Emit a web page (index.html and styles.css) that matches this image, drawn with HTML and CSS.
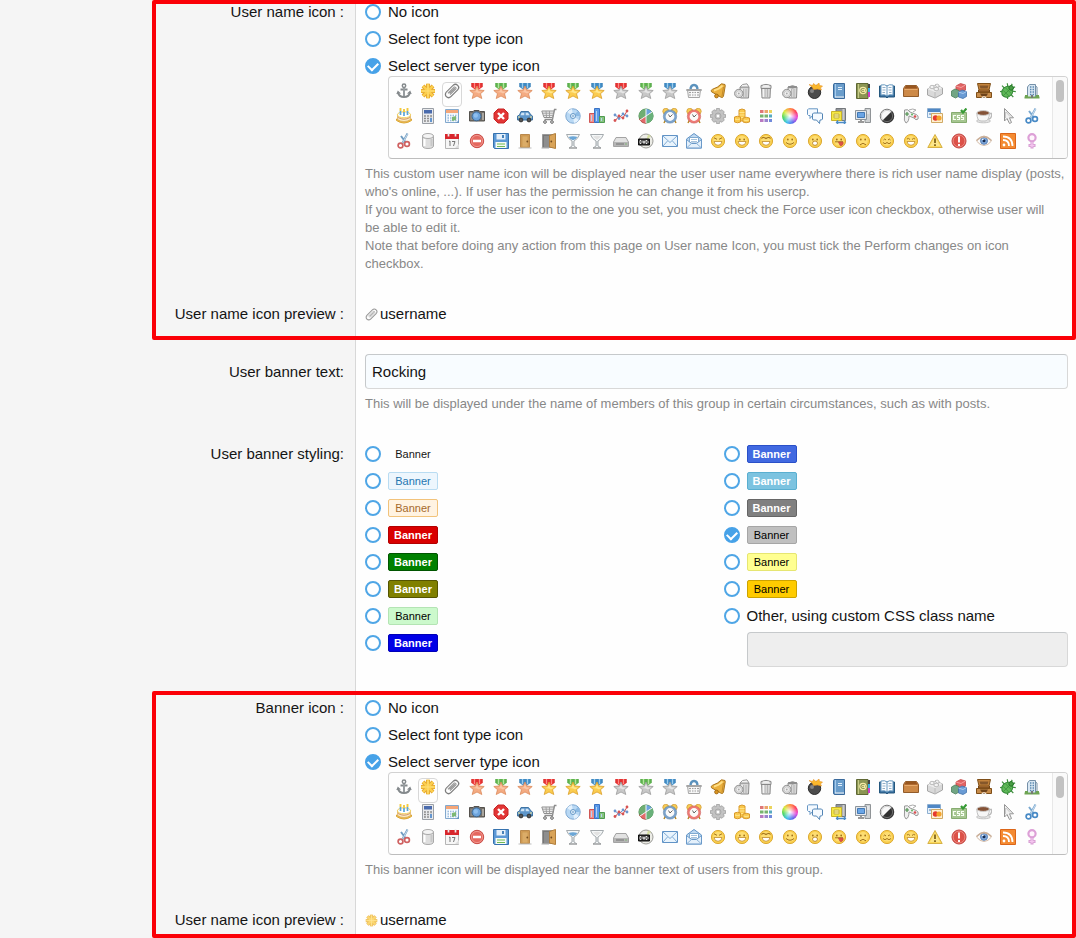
FILE: index.html
```
<!DOCTYPE html>
<html lang="en">
<head>
<meta charset="utf-8">
<meta name="viewport" content="width=device-width, initial-scale=1">
<title>User group options</title>
<link rel="stylesheet" href="styles.css">
</head>
<body>
<form class="form">
  <section class="section section--top marked">
    <div class="row">
      <div class="row-label" id="name-icon-label">User name icon :</div>
      <div class="row-body" role="radiogroup" aria-labelledby="name-icon-label">
        <div class="options">
          <label class="option"><input class="radio" type="radio" name="nameicon"><span>No icon</span></label>
          <label class="option"><input class="radio" type="radio" name="nameicon"><span>Select font type icon</span></label>
          <label class="option"><input class="radio" type="radio" name="nameicon" checked><span>Select server type icon</span></label>
        </div>
        <div class="picker">
          <div class="picker-list" data-selected="attach" data-preview="name-preview"></div>
          <div class="picker-track"><div class="picker-thumb"></div></div>
        </div>
        <p class="hint">This custom user name icon will be displayed near the user user name everywhere there is rich user name display (posts, who's online, ...). If user has the permission he can change it from his usercp.<br>If you want to force the user icon to the one you set, you must check the Force user icon checkbox, otherwise user will be&nbsp;able to edit it.<br>Note that before doing any action from this page on User name Icon, you must tick the Perform changes on icon checkbox.</p>
      </div>
    </div>
    <div class="row row--preview">
      <div class="row-label">User name icon preview :</div>
      <div class="row-body preview"><span class="preview-icon" id="name-preview"></span><span>username</span></div>
    </div>
  </section>

  <section class="section section--middle">
    <div class="row">
      <label class="row-label row-label--input" for="banner-text">User banner text:</label>
      <div class="row-body">
        <input class="text-input" id="banner-text" type="text" value="Rocking">
        <p class="hint">This will be displayed under the name of members of this group in certain circumstances, such as with posts.</p>
      </div>
    </div>
    <div class="row row--preview">
      <div class="row-label" id="styling-label">User banner styling:</div>
      <div class="row-body columns" role="radiogroup" aria-labelledby="styling-label">
        <div class="options">
          <label class="option"><input class="radio" type="radio" name="style"><span class="banner">Banner</span></label>
          <label class="option"><input class="radio" type="radio" name="style"><span class="banner banner--primary">Banner</span></label>
          <label class="option"><input class="radio" type="radio" name="style"><span class="banner banner--accent">Banner</span></label>
          <label class="option"><input class="radio" type="radio" name="style"><span class="banner banner--red">Banner</span></label>
          <label class="option"><input class="radio" type="radio" name="style"><span class="banner banner--green">Banner</span></label>
          <label class="option"><input class="radio" type="radio" name="style"><span class="banner banner--olive">Banner</span></label>
          <label class="option"><input class="radio" type="radio" name="style"><span class="banner banner--light-green">Banner</span></label>
          <label class="option"><input class="radio" type="radio" name="style"><span class="banner banner--blue">Banner</span></label>
        </div>
        <div class="options">
          <label class="option"><input class="radio" type="radio" name="style"><span class="banner banner--royal">Banner</span></label>
          <label class="option"><input class="radio" type="radio" name="style"><span class="banner banner--sky">Banner</span></label>
          <label class="option"><input class="radio" type="radio" name="style"><span class="banner banner--gray">Banner</span></label>
          <label class="option"><input class="radio" type="radio" name="style" checked><span class="banner banner--silver">Banner</span></label>
          <label class="option"><input class="radio" type="radio" name="style"><span class="banner banner--yellow">Banner</span></label>
          <label class="option"><input class="radio" type="radio" name="style"><span class="banner banner--orange">Banner</span></label>
          <div class="custom">
            <label class="option"><input class="radio" type="radio" name="style"><span>Other, using custom CSS class name</span></label>
            <input class="text-input text-input--custom" type="text" aria-label="Custom CSS class name" disabled>
          </div>
        </div>
      </div>
    </div>
  </section>

  <section class="section section--bottom marked">
    <div class="row">
      <div class="row-label" id="banner-icon-label">Banner icon :</div>
      <div class="row-body" role="radiogroup" aria-labelledby="banner-icon-label">
        <div class="options">
          <label class="option"><input class="radio" type="radio" name="bannericon"><span>No icon</span></label>
          <label class="option"><input class="radio" type="radio" name="bannericon"><span>Select font type icon</span></label>
          <label class="option"><input class="radio" type="radio" name="bannericon" checked><span>Select server type icon</span></label>
        </div>
        <div class="picker">
          <div class="picker-list" data-selected="asterisk" data-preview="banner-preview"></div>
          <div class="picker-track"><div class="picker-thumb"></div></div>
        </div>
        <p class="hint">This banner icon will be displayed near the banner text of users from this group.</p>
      </div>
    </div>
    <div class="row row--preview">
      <div class="row-label">User name icon preview :</div>
      <div class="row-body preview"><span class="preview-icon" id="banner-preview"></span><span>username</span></div>
    </div>
  </section>
</form>
<script src="icons.js"></script>
</body>
</html>
```
FILE: styles.css
```
* {
  box-sizing: border-box;
}

body {
  margin: 0;
  background: #fefefe;
  color: #141414;
  font-family: "Liberation Sans", Arial, sans-serif;
  font-size: 15px;
  line-height: 18px;
}

.form {
  min-height: 100vh;
  background: linear-gradient(to right, #f5f5f5 355px, #d8d8d8 355px, #d8d8d8 356px, #fefefe 356px);
}

.section--top {
  padding: 3px 0 17px;
}

.section--middle {
  padding: 14px 0 24px;
}

.section--bottom {
  padding: 8px 0 9px;
}

/* Red frame drawn over the highlighted settings */
.marked {
  position: relative;
}

.marked::after {
  content: "";
  position: absolute;
  inset: 0 0 0 152px;
  border: 4px solid #fb0007;
  border-radius: 2px;
  pointer-events: none;
}

.row {
  display: grid;
  grid-template-columns: 355px minmax(0, 1fr);
}

.row--preview {
  margin-top: 32px;
}

.row-label {
  padding-right: 11px;
  text-align: right;
}

.row-label--input {
  padding-top: 9px;
}

.row-body {
  padding: 0 8px 0 10px;
}

.options {
  display: flex;
  flex-direction: column;
  gap: 9px;
}

.option {
  display: flex;
  align-items: center;
  gap: 7px;
  height: 18px;
}

.radio {
  appearance: none;
  flex: none;
  display: grid;
  place-content: center;
  width: 16px;
  height: 16px;
  margin: 0;
  border: 2px solid #4fa6e6;
  border-radius: 50%;
  background: #fff;
}

.radio:checked {
  background: #47a2e8;
  border-color: #47a2e8;
}

.radio:checked::before {
  content: "";
  width: 8px;
  height: 5px;
  margin-bottom: 2px;
  border: solid #fff;
  border-width: 0 0 2px 2px;
  transform: rotate(-45deg);
}

.hint {
  margin: 6px 0 0;
  color: #888;
  font-size: 13px;
  line-height: 18px;
}

.picker {
  display: flex;
  margin: 1px 0 0 23px;
  border: 1px solid #d2d2d2;
  border-bottom-color: #bdbdbd;
  border-radius: 4px;
  background: #fefefe;
  overflow: hidden;
}

.picker-list {
  flex: 1;
  display: grid;
  grid-template-columns: repeat(auto-fill, minmax(24px, 1fr));
  grid-auto-rows: 25px;
  justify-items: center;
  padding: 5px 8px 1px 3px;
}

.picker-track {
  width: 15px;
  padding: 3px;
  border-left: 1px solid #e8e8e8;
  background: #fafafa;
}

.picker-thumb {
  height: 22px;
  border-radius: 4px;
  background: #c2c2c2;
}

.icon-button {
  display: block;
  width: 20px;
  height: 25px;
  padding: 0 1px 7px;
  border: 1px solid transparent;
  border-radius: 4px;
  background: none;
  cursor: pointer;
}

.icon-button[aria-pressed="true"] {
  border-color: #d8d8d8;
}

.icon {
  display: block;
  width: 16px;
  height: 16px;
}

.preview {
  display: flex;
  align-items: center;
  gap: 2px;
}

.preview-icon {
  opacity: 0.8;
}

.preview-icon .icon {
  width: 13px;
  height: 13px;
}

.text-input {
  display: block;
  width: 100%;
  height: 35px;
  padding: 0 6px;
  border: 1px solid #d8d8d8;
  border-color: #c6c9cb #d8d8d8 #d8d8d8 #c6c9cb;
  border-radius: 4px;
  background: #f8fcff;
  color: #141414;
  font: inherit;
}

.columns {
  display: grid;
  grid-template-columns: 1fr 1fr;
  gap: 14px;
}

.custom {
  display: grid;
  gap: 7px;
}

.text-input--custom {
  width: auto;
  margin-left: 23px;
  background: #eee;
}

.banner {
  min-width: 50px;
  padding: 0 5px;
  border: 1px solid transparent;
  border-radius: 2px;
  font-size: 11px;
  line-height: 16px;
  text-align: center;
}

.banner--primary { background: #edf6fd; border-color: #b9dcf2; color: #2577b1; }
.banner--accent { background: #fff3e2; border-color: #f2c37b; color: #a66a2c; }
.banner--red { background: #d90000; border-color: #b30000; color: #fff; font-weight: bold; }
.banner--green { background: #008000; border-color: #005500; color: #fff; font-weight: bold; }
.banner--olive { background: #808000; border-color: #555500; color: #fff; font-weight: bold; }
.banner--light-green { background: #ccf9cc; border-color: #b4e4b4; color: #000; }
.banner--blue { background: #0000e6; border-color: #0000b8; color: #fff; font-weight: bold; }
.banner--royal { background: #4169e1; border-color: #2a50c8; color: #fff; font-weight: bold; }
.banner--sky { background: #7cc3e0; border-color: #5aafd0; color: #fff; font-weight: bold; }
.banner--gray { background: #808080; border-color: #666; color: #fff; font-weight: bold; }
.banner--silver { background: #c0c0c0; border-color: #a6a6a6; color: #000; }
.banner--yellow { background: #ffff91; border-color: #e6e672; color: #000; }
.banner--orange { background: #ffcb00; border-color: #cca300; color: #000; }
```
FILE: icons.js
```
(function () {
  function p(d, fill, stroke, width) {
    return '<path d="' + d + '" fill="' + (fill || 'none') + '"' +
      (stroke ? ' stroke="' + stroke + '" stroke-width="' + (width || 1) + '"' : '') + '/>';
  }
  function c(x, y, r, fill, stroke, width) {
    return '<circle cx="' + x + '" cy="' + y + '" r="' + r + '" fill="' + (fill || 'none') + '"' +
      (stroke ? ' stroke="' + stroke + '" stroke-width="' + (width || 1) + '"' : '') + '/>';
  }

  function medal(star, edge, shine, ribbon, dark, pale) {
    return p('M2.500 0H13.500V4L10 6.500H6L2.500 4Z', ribbon) + p('M3 0V4M13 0V4M8 0V5', '', dark) +
      p('M5.500 0V5M10.500 0V5', '', pale) +
      p('M8 3L9.900 7L15.200 7.500L11.500 10.700L12.800 15.500L8 13L3.200 15.500L4.500 10.700L.8 7.500L6.100 7Z', star, edge, 0.8) +
      p('M8 5L9.200 8.300L13 8.700L10 10.500L8 9.500L4 9L6.800 8.300Z', shine);
  }
  var bronze = ['#f4ab82', '#dc8a5c', '#fbc7a6'];
  var gold = ['#fbcc4f', '#dc9f2a', '#ffe78f'];
  var silver = ['#c8c8c8', '#9c9c9c', '#e6e6e6'];
  var red = ['#ee3b3b', '#cf2c2c', '#f98a85'];
  var green = ['#6fc05c', '#4da043', '#b2e2a0'];
  var blue = ['#4c96cd', '#377cb4', '#9ccbeb'];
  function m(metal, ribbon) { return medal.apply(null, metal.concat(ribbon)); }

  function face(inner) {
    return c(8, 8, 6.600, '#f9ce4c', '#dcaa36') + c(8, 7.800, 4.800, '#fddd72') + inner;
  }
  var line = '#a2731c';
  var eyes = c(5.800, 6.500, 0.900, line) + c(10.200, 6.500, 0.900, line);
  var teeth = p('M4 8.500H12Q11.500 12.300 8 12.300T4 8.500Z', '#fff', '#c08c2c', 0.8);
  var brows = p('M4.500 7Q5.700 5 7 7M9 7Q10.300 5 11.500 7', '', line);

  function can(x) {
    return p('M' + x + ' 4L' + (x + 0.5) + ' 15H' + (x + 8.5) + 'L' + (x + 9) + ' 4Z', '#d6d6d6', '#8c8c8c') +
      p('M' + (x + 3.500) + ' 6V14M' + (x + 6) + ' 6V14', '', '#b4b4b4') + p('M' + (x + 2) + ' 6V14', '', '#f4f4f4', 1.5);
  }
  var lid = c(4.800, 10.500, 4.200, '#dcdcdc', '#8f8f8f') + c(4.800, 10.500, 2.600, '#efefef', '#bbb', 0.6) + c(4.800, 10.500, 0.900, '#aaa');

  function clock(rim, edge) {
    return p('M3.500 12L2 15M12.500 12L14 15', '', '#b98a28', 1.5) +
      c(3.800, 3.300, 3, '#f8cc55', '#d39f3a', 0.8) + c(12.200, 3.300, 3, '#f8cc55', '#d39f3a', 0.8) +
      c(8, 8.500, 5.500, '#fafafa', rim, 2.200) + c(8, 8.500, 6.700, '', edge, 0.5) + p('M6.500 6.500L8 9L10.500 6.500', '', '#666');
  }
  function scissors(handle, blade) {
    return p('M11.500 0.500L6 11M5 3L11 11', '', blade, 2) + p('M11.500 1L6.500 10', '', '#eef5fa', 0.7) +
      c(4.500, 12.500, 2.400, '#fff', handle, 1.7) + c(11, 11, 2.400, '#fff', handle, 1.7);
  }
  function glass(liquid) {
    return p('M1.500 1.500H14.500Q13 6 9 8V13L12 15H4L7 13V8Q3 6 1.500 1.500Z', '#f5f8f9', '#a4aaae') +
      (liquid ? p('M3.500 4Q8 2.500 12.500 4Q11 6.500 8 7.300Q5 6.500 3.500 4Z', liquid) : p('M4 3.500Q8 2 12 3.500L8 7Z', '#e2e2e2')) +
      p('M8 8V13', '', '#b9bec1', 1.3) + p('M4 15H12', '', '#999');
  }
  var rays = 'M8 .8V15.200M1 8H15M3 3L13 13M13 3L3 13';

  var icons = {
    anchor: c(8, 2.800, 1.700, '', '#84898c', 1.5) + p('M8 4.500V14M4.500 6.500H11.500', '', '#84898c', 2) + p('M2 9.500Q3 14 8 14T14 9.500', '', '#84898c', 2) + p('M.3 11L1.800 7.500L5 10.500ZM15.700 11L14.200 7.500L11 10.500Z', '#84898c') + p('M8 5V13', '', '#bcc2c5', 0.7),
    asterisk: p(rays, '', '#e3a52f', 4) + p(rays, '', '#fccf4e', 2.400) + p('M8 2V14M2 8H14', '', '#ffe284', 0.8),
    attach: '<g transform="rotate(-45 8 8)" fill="none"><rect x="0" y="4.800" width="16" height="6.400" rx="3.200" stroke="#7e7e7e" stroke-width="1.300"/><path d="M12 8H4.500M3.500 6.800H12.500Q14 8 12.500 9.200H4" stroke="#929292"/><path d="M3 5.400H13" stroke="#c9c9c9" stroke-width=".6"/></g>',
    medal1: m(bronze, red), medal2: m(bronze, green), medal3: m(bronze, blue),
    medal4: m(gold, red), medal5: m(gold, green), medal6: m(gold, blue),
    medal7: m(silver, red), medal8: m(silver, green), medal9: m(silver, blue),
    basket: p('M4.500 7Q4.500 2 8 2T11.500 7', '', '#5b92bd', 2.400) + p('M1.500 7H14.500L13.500 14.500H2.500Z', '#f2f2f2', '#a5a5a5') + p('M3 9.500H13M3 12H13', '', '#a0a0a0', 1.2) + p('M5.500 8V14M8 8V14M10.500 8V14', '', '#fafafa', 1) + p('M.3 7H15.700', '', '#a5a5a5', 1.8),
    bell: p('M11.500 .8L15 1.500L15.200 3L13.500 13Q12.800 15.300 11 14.200L1.500 8.800Q.3 7.300 2.500 6.300Q8 4.500 11.500 .8Z', '#eab03e', '#a9751f') + p('M12.500 2.500Q9 6.500 4 7.500', '', '#ffdf86', 1.8) + p('M13.500 4L12 13', '', '#c48a28') + c(6.500, 13, 1.900, '#d99522', '#9c6512', 0.8),
    bin: can(6) + p('M6 4L8.500 1.500L13 .8L15 4Z', '#f3f3f3', '#999') + lid,
    bin_closed: can(3.500) + p('M3 2.500Q8 .2 13 2.500V5.500H3Z', '#dedede', '#888') + p('M5 3H11', '', '#fff'),
    bin_empty: can(6) + p('M6 4Q10.500 1.500 15 4Q10.500 6 6 4Z', '#8d8d8d', '#8d8d8d') + lid,
    bomb: c(7.500, 9.300, 6.200, '#4c4c4c', '#2c2c2c') + c(5, 8, 2, '#858585') + p('M9 5L10 3L12 4', '', '#777', 2) + p('M2 1.500L5.500 2.500L6.500 .5L9 2.500L12 0L12.500 2.500L15.500 3L13.500 5L14.500 7L10.500 6L6.500 6.500L5.500 4.500Z', '#fab82c', '#e8932a', 0.6),
    book: p('M2.500 1.500Q2.500 .5 4 .5H13.500V15.500H4Q2.500 15.500 2.500 14Z', '#6a9dcb', '#3a6a9c') + p('M4.500 1V14', '', '#a6caec') + p('M7 4.500H11M7 6.500H11', '', '#e0eefb') + p('M4 14H13', '', '#f5f5f5'),
    book_addresses: p('M1.500 .5H13V15.500H1.500Z', '#8b9553', '#5f6834') + p('M13 1H15V5H13Z', '#444') + p('M13 5H15V9H13Z', '#36afe8') + p('M13 9H15V14H13Z', '#d23cc6') + p('M3.500 1V15', '', '#c5ca87') + c(8, 7.500, 3.200, '', '#f4e9a5', 1.2) + c(8, 7.500, 1.200, '', '#f4e9a5') + p('M9.500 6V9H11', '', '#f4e9a5'),
    book_open: p('M.5 3H15.500V14H9L8 15L7 14H.5Z', '#386e9e', '#24577e') + p('M2 2Q6 1 8 3Q10 1 14 2V12Q10 11 8 13Q6 11 2 12Z', '#fbfdff', '#6a9ac0') + p('M8 3V13', '', '#6a9ac0') + p('M3.500 4.500H6.500M3.500 7H6.500M3.500 9.500H6M9.500 4.500H12.500M9.500 7H12.500M10 9.500H12.500', '', '#7b9dba', 0.8),
    box: p('M2.500 2.500H13.500L15.500 5.500V13.500H.5V5.500Z', '#c98346', '#925c2a') + p('M3 3H13L14.500 5.500H1.500Z', '#98561f') + p('M1.500 6H14.500V13H1.500Z', '#cd8a48') + p('M1.500 6.500H14.500', '', '#e7ab6c'),
    brick: p('M.5 6L8.500 2L15.500 5V11L8 15L.5 12Z', '#d9d9d9', '#a6a6a6') + p('M.5 6L8 9L15.500 5L8.500 2Z', '#ededed') + p('M8 9V15', '', '#bbb') + p('M3 5V3Q5 1.500 7 3V5Q5 6.500 3 5ZM8.500 3V1.500Q10.500 .5 12 2V4Q10 5 8.500 3ZM7 7V5Q9.500 3.500 11.500 5V7Q9 8.500 7 7Z', '#f3f3f3', '#b0b0b0', 0.8),
    bricks: p('M5 3L9.500 .5L14.500 2V7L10 9.500L5 7Z', '#e26363', '#c44a4a', 0.8) + p('M5 3L10 4.500L14.500 2', '', '#f4a0a0') + p('M.5 8L4 6L8 7.500V13L4.500 15L.5 13Z', '#71a584', '#4d7f5d', 0.8) + p('M7.500 9L11 7L15.500 8.500V13.500L12 15.500L7.500 14Z', '#6a9bd4', '#4172ab', 0.8) + p('M7.500 9L12 10.500L15.500 8.500', '', '#a8cbee'),
    briefcase: p('M1.500 .5H14.500L13 7H3Z', '#c4843d', '#7e4e18') + p('M3.500 2.500H12.500L11.500 5.500H4.500Z', '#85572a') + p('M2.500 7V9H13.500V7', '#9a632c', '#724312') + p('M.5 9.500H15.500V14.500H.5Z', '#c78c4b', '#7e4e18') + p('M4 10.500H12L10.500 13H5.500Z', '#6d421a') + p('M5.500 15.500Q8 12 10.500 15.500', '', '#eee', 1.2),
    bug: '<g transform="rotate(45 8 8)">' + p('M2 3L6 6M14 3L10 6M0 8.500H4M16 8.500H12M2 15L5 11M14 15L11 11M6 0L7 4M10 0L9 4', '', '#3f8f3e', 1.2) + '<ellipse cx="8" cy="9" rx="5" ry="6" fill="#5fb858" stroke="#338637"/>' + p('M8 4V15M4 7.500H12M4 11H12', '', '#3c923f', 0.8) + c(8, 3.500, 2.200, '#4a9c45', '#287b2a') + '</g>',
    building: p('M5.500 1.500H11.500V14.500H3.500V4Z', '#d8e7f3', '#7590a8') + p('M11.500 3L13 4V14.500', '', '#7590a8') + p('M6 4H10M6 6.500H10M6 9H10M6 11.500H10', '', '#5889b1', 1.3) + p('M8 3V13', '', '#e8f1f8') + p('M.5 14.500H15.500M1 13H4M12 13H15', '', '#6ea453', 1.8) + p('M7 12H9V15H7Z', '#777'),

    cake: p('M.5 11Q8 16 15.500 11V12.500Q8 17.500 .5 12.500Z', '#f5c751', '#d9a435') + p('M1.500 6.500V11.500Q8 15.500 14.500 11.500V6.500Z', '#fcefc8', '#e0ae5c', 0.8) + '<ellipse cx="8" cy="6.800" rx="6.600" ry="3" fill="#fff" stroke="#f0cf5c"/>' + p('M2 9.500Q8 13 14 9.500', '', '#c97b4c', 0.8) + p('M4.500 3V7M8 4V8M11.500 3V7', '', '#5aa5da', 1.7) + p('M4.500 0V3M8 1V4M11.500 0V3', '', '#f3c93c', 1.9),
    calculator: p('M2.500 .5H13.500V15.500H2.500Z', '#e9eaec', '#9a9fa6') + p('M4 2H12V5.500H4Z', '#4a6bad') + p('M4 8H12M4 10.500H12M4 13H12', '', '#888', 1.5) + p('M6.500 7V15M9.500 7V15', '', '#e9eaec', 1.2) + p('M10 10H12V14H10', '#6596cf'),
    calendar: p('M1.500 1.500H14.500V14.500H1.500Z', '#eef5fc', '#82a8cd') + p('M2 2H14V5H2Z', '#f5a678') + p('M3.500 7.500H12.500M3.500 10H12.500M3.500 12.500H12.500', '', '#9cbddd', 1.5) + p('M5.500 6V14M8 6V14M10.500 6V14', '', '#fff') + p('M8 9L12 8V12L8 13Z', '#7cb873') + p('M12 15L15 12V15Z', '#6794c1'),
    camera: p('M.5 3.500H4L5 2.500H10L11 3.500H15.500V13H.5Z', '#74706a', '#55524e') + p('M1.500 5H4V12H1.500Z', '#8f8b84') + c(7.500, 8.300, 4.500, '#6da4dc', '#3d668f') + c(6.800, 7.500, 2.200, '#8fbfee') + p('M13 5H15V12H13Z', '#aaa69e'),
    cancel: p('M5 1H11L15 5V11L11 15H5L1 11V5Z', '#e13535', '#c82525') + p('M5 5L11 11M11 5L5 11', '', '#fff', 2.4),
    car: p('M4 3.500H11.500L14 7L15.500 8V12H.5V8L2.500 7Z', '#5e96ca', '#3f74a4') + p('M4.500 4.800H7.300V7.300H3.500ZM8.700 4.800H11L12.500 7.300H8.700Z', '#cfe3f4') + c(4, 12, 1.900, '#555', '#333') + c(12, 12, 1.900, '#555', '#333') + p('M1 9H3M13 9H15', '', '#f4e594'),
    cart: p('M15.500 1.500H13.500L11.500 11.500H3.500', '', '#8d8d8d', 1.3) + p('M.8 3H13L11.500 9.500H3Z', '#eee', '#8f8f8f') + p('M2 5.200H12M2.500 7.400H12M5 3L5.500 9M8.500 3V9', '', '#9c9c9c', 0.9) + c(4, 14, 1.400, '#ccc', '#777') + c(11, 14, 1.400, '#ccc', '#777'),
    cd: c(8, 8, 7.200, '#b8d8f4', '#7ea8d2') + p('M8 8L2 4Q4 1.500 7 1ZM8 8L14 12Q12 14.500 9 15Z', '#e3f1fd') + p('M8 8L13 3Q15 5 15 8Z', '#8dbbe4') + c(8, 8, 2.500, '#eaf6ff', '#6698c6') + c(8, 8, 0.800, '#fff', '#6698c6', 0.7),
    chart_bar: p('M.5 5.500H5.500V14.500H.5Z', '#f08f8d', '#d05654') + p('M5.500 .5H10.500V14.500H5.500Z', '#5b9be9', '#3a72c4') + p('M10.500 8.500H15.500V14.500H10.500Z', '#86c47e', '#4f9a52') + p('M2.500 7V13M7.500 3V13M12.500 10V13', '', '#b7d3f4'),
    chart_line: p('M2 7L6 10L10 6L14 8', '', '#6a95ce') + p('M2 13L6 8L10 10L14 3', '', '#d65353') + c(2, 7, 1.400, '#6a95ce') + c(6, 10.500, 1.400, '#6a95ce') + c(10, 6, 1.400, '#6a95ce') + c(14, 8, 1.400, '#6a95ce') + c(2, 12.500, 1.400, '#d65353') + c(6, 8, 1.400, '#d65353') + c(10, 10, 1.400, '#d65353') + c(14, 3, 1.400, '#d65353'),
    chart_pie: c(8, 8, 7, '#6eb269', '#438749') + p('M8 8V15.200A7 7 0 0 1 1.500 11Z', '#e36a6a', '#bc4444', 0.7) + p('M8 8V1A7 7 0 0 0 1 9L3 11Z', '#6fae73') + p('M8 8V1A7 7 0 0 1 14 4.500Z', '#6ba3de') + p('M8 8L14 4A7 7 0 0 1 8 15Z', '#69b17a') + p('M8 1V15M8 8L14 4M8 8L2 12', '', '#f4f7fa'),
    clock: clock('#7ba3cc', '#52799f'),
    clock_red: clock('#ee7a76', '#c34e4b'),
    cog: p('M6.500 .5H9.500L10 3L12 1.700L14.300 4L13 6L15.500 6.500V9.500L13 10L14.300 12L12 14.300L10 13L9.500 15.500H6.500L6 13L4 14.300L1.700 12L3 10L.5 9.500V6.500L3 6L1.700 4L4 1.700L6 3Z', '#c3c3c3', '#a0a0a0', 0.8) + c(8, 8, 3, '', '#aaa') + c(8, 8, 1.900, '#fff', '#aaa', 0.6),
    coins: p('M5 2Q8 0 11 2V13H5Z', '#f9c84c', '#d99a2c') + p('M5.500 4.500H10.500M5.500 7H10.500M5.500 9.500H10.500', '', '#ffe386') + p('M.5 9Q3.500 7.500 6.500 9V14Q3.500 15.500 .5 14Z', '#f9c84c', '#d99a2c') + p('M9 10Q12 8.500 15.500 10V14Q12 15.500 9 14Z', '#f9c84c', '#d99a2c') + p('M1 11Q3.500 12 6 11M9.500 12Q12 13 15 12', '', '#ffe994'),
    swatch: p('M2 2H5.500V5H2Z', '#df7777') + p('M6.500 2H10V5H6.500Z', '#eba56b') + p('M11 2H14V5H11Z', '#ead45d') + p('M2 6.500H5.500V9.500H2Z', '#78b36f') + p('M6.500 6.500H10V9.500H6.500Z', '#78b36f') + p('M11 6.500H14V9.500H11Z', '#57a9c0') + p('M2 11H5.500V14H2Z', '#b879c1') + p('M6.500 11H10V14H6.500Z', '#9a83ce') + p('M11 11H14V14H11Z', '#718adb'),
    wheel: '<foreignObject x="0" y="0" width="16" height="16"><div xmlns="http://www.w3.org/1999/xhtml" style="width:16px;height:16px;border-radius:50%;background:radial-gradient(#fff,transparent 65%),conic-gradient(#ff8a3c,#ff3a50,#e643d8,#5b61ec,#39bfed,#42d65a,#d8e939,#ff8a3c)"></div></foreignObject>',
    comments: p('M1.500 .8H10.500V7.500H5.500L3 10.500V7.500H1.500L.5 6.500V1.800Z', '#f5faff', '#6796c4') + p('M6.500 5H14.500L15.500 6V11L14.500 12H13L12.500 15.500L9.500 12H6.500L5.500 11V6Z', '#f5faff', '#5385b5'),
    compress: p('M5 .5H14.500V12.500H5Z', '#92959a', '#73777b') + p('M12.500 1V12', '', '#ccc', 2) + p('M.5 3.500H10.500V12.500H.5Z', '#f5e844', '#c9b42a') + p('M3 6H8V10H3ZM3 8H8', '#fff7a0', '#b9a53c', 0.8) + p('M6 14.500H14M7 12.500L5.500 14.500L7 16M13 12.500L14.500 14.500L13 16', '', '#4c8cc7', 1.3),
    computer: p('M10 .5H15.500V14.500H10Z', '#cdd0d2', '#909497') + p('M12 3H14.500M12 5H14.500', '', '#f8f8f8') + p('M.5 2.500H11.500V11.500H.5Z', '#e3e7ec', '#8c949b') + p('M2.500 4.500H9.500V9.500H2.500Z', '#6aa5e6', '#4378b3') + p('M3 14H9M6 12V14', '', '#999', 2),
    contrast: c(8, 8, 6.800, '#f8f8f8', '#777') + p('M13 3A7 7 0 0 1 3 13Z', '#313131') + c(8, 8, 5.600, '', '#aaa', 0.5),
    controller: p('M1.500 2Q5 .5 7 4L12 6Q16 7 15 11Q13 13 11 10L6 8Q6 14 3 15Q.5 13 1.500 8Z', '#efefef', '#989898') + p('M2 6H6M4 4V8', '', '#4d8f4d', 1.2) + c(9, 6.500, 1, '#5fb95e') + c(12, 8.500, 1.300, '#db5151') + p('M6 2Q10 0 13 2L10 4', '', '#aaa'),
    cards: p('M.5 .5H13.500V9.500H.5Z', '#e6f1fb', '#8caed0') + p('M1 1H13V4H1Z', '#4f87c5') + p('M2 6H5', '', '#5280b0') + p('M4.500 5.500H15.500V14.500H4.500Z', '#fff0d2', '#d0aa66') + c(8.500, 10, 2.700, '#e53930') + c(12, 10, 2.600, '#f5a42c'),
    css: p('M.5 4.500H15.500V14.500H.5Z', '#a6c691', '#86ac70') + p('M5 7.500H2.500V11.500H5M9 7.500H6.500V9.500H8.500V11.500H6M13 7.500H10.500V9.500H12.500V11.500H10', '', '#f8fff3', 1.2) + p('M10 2L12 4.500L15.500 .5', '', '#379b35', 2.200),
    cup: p('M12.500 5.500H15.500V8Q15 11 12 11', '', '#bbb', 1.3) + '<ellipse cx="7.500" cy="13" rx="7" ry="1.800" fill="#e5e5e5" stroke="#c4c4c4"/>' + p('M.8 5Q1 13 5 13H9Q13 13 13.500 5Z', '#f6f6f6', '#c0c0c0') + '<ellipse cx="7.200" cy="5" rx="6.300" ry="2.400" fill="#845236" stroke="#d0d0d0"/>',
    cursor: p('M4.500 .5V13L7 10.500L9.500 15.500L11.500 14.500L9.500 9.800H13.500Z', '#f1f1f1', '#949494') + p('M5.500 4V10M6 4L10 8.500', '', '#c9c9c9'),
    cut: scissors('#488ac6', '#79a8d0'),

    cut_red: scissors('#cf6262', '#6f9cc2'),
    database: p('M2.500 3V13Q3 15.500 8 15.500T13.500 13V3Z', '#dedede', '#aaa') + '<ellipse cx="8" cy="3" rx="5.500" ry="2.500" fill="#f4f4f4" stroke="#aaa"/>' + p('M4.500 6V13', '', '#fff', 2) + p('M11.500 6V13', '', '#c8c8c8', 2),
    date: p('M1.500 3.500H14.500V15.500H1.500Z', '#f6f6f6', '#b5b5b5') + p('M1 1H15V6H1Z', '#d8262c') + p('M4.500 0V3.500M11.500 0V3.500', '', '#eee', 1.7) + p('M5 8.500L6 8V13M8 8.500H11L9.500 13', '', '#777') + p('M11 15L15 11V15Z', '#ddd'),
    remove: c(8, 8, 6.700, '#e4685f', '#c84c46') + c(8, 8, 5.600, '', '#f0968e') + p('M4 8H12', '', '#fff', 2.4),
    disk: p('M.5 .5H15.500V15.500H1.500L.5 14.500Z', '#5c99d6', '#3672ae') + p('M3.500 1H12.500V6.500H3.500Z', '#e5f0fa') + p('M10 2V5', '', '#4681b9', 2) + p('M2.500 9H13.500V15H2.500Z', '#f8fbf5') + p('M4 11H12M4 13.500H12', '', '#6fba55', 1.2),
    door: p('M3.500 1.500H12.500V14.500H3.500Z', '#d29c55', '#b9894d') + p('M5 3H11V14H5Z', '#dbac68', '#c9964f', 0.7) + c(10.300, 8.500, 0.900, '#785020') + p('M1.500 15H14.500', '', '#bbb'),
    door_open: p('M1.500 1.500H12V14.500H1.500Z', '#777', '#999') + p('M3 3H8V14H3Z', '#8e8e8e') + p('M8.500 2.500L14.500 .5V15.500L8.500 14Z', '#d9a358', '#b17f3d') + c(10.300, 8.500, 0.900, '#70491e') + p('M.5 15H8', '', '#aaa'),
    drink: glass('#6ba6d6'),
    drink_empty: glass(''),
    drive: p('M3 4.500H13L15.500 9V13.500H.5V9Z', '#d2d2d2', '#a3a3a3') + p('M3.500 5H12.500L14.500 9H1.500Z', '#e2e2e2') + p('M1 9H15V13H1Z', '#b5b5b5') + p('M3 11H11', '', '#8a8a8a', 1.3) + c(13, 11, 0.700, '#71b965'),
    dvd: c(8, 8, 7, '#ecece6', '#9c9c98') + p('M8 8L10 1.500L13 3Z', '#d5dfa0') + c(8, 8, 2, '#fff', '#aaa') + p('M.5 6H11.500V12H.5Z', '#292929', '#111') + p('M2 7.500H3L4 8.500V9.500L3 10.500H2ZM5 7.500L6 10.500L7 7.500M8 7.500H9L10 8.500V9.500L9 10.500H8Z', '', '#f6f6f6', 0.9),
    email: p('M.5 2.500H15.500V13.500H.5Z', '#e9f4fd', '#6193c6') + p('M1 3L8 9.500L15 3M1 13L5.500 8M15 13L10.500 8', '', '#81acd5'),
    email_open: p('M.5 6L8 .5L15.500 6V15H.5Z', '#bfd9f1', '#6193c6') + p('M3.500 4.500H12.500V10H3.500Z', '#fff', '#80aad0') + p('M5 6.500H11M5 8.500H11', '', '#a7c3dd') + p('M.5 6.500L5.500 10.500H10.500L15.500 6.500V15H.5Z', '#e4f0fb', '#6a99c9') + p('M1 14.500L5.500 10.500M15 14.500L10.500 10.500', '', '#8db4d9'),
    face1: face(p('M4 4.800L7 6.300M12 4.800L9 6.300', '', line) + teeth),
    face2: face(eyes + teeth),
    face3: face(p('M3.500 5.500Q5 3.500 8 5.500Q11 3.500 12.500 5.500', '', line, 1.200) + teeth),
    face4: face(eyes + p('M4 9.500Q8 13 12 9.500', '', line)),
    face5: face(eyes + '<ellipse cx="8" cy="10.200" rx="2.500" ry="2.200" fill="#fff" stroke="#c08c2c"/>'),
    face6: face(eyes + p('M4 8.800H12', '', line) + p('M7.500 9H12V11Q11 13.300 9 12.300Z', '#df5347', '#c34a3c', 0.7)),
    face7: face(eyes + p('M5 11.800Q8 8.800 11 11.800', '', line)),
    face8: face(brows + p('M4 9.500Q6 12 8 9.500Q10 12 12 9.500', '', line)),
    face9: face(p('M4 6Q5.500 4.500 7 6.500M9 6.500Q10.500 4.500 12 6', '', line) + teeth),
    error: p('M8 1.500L15.200 14.500H.8Z', '#fcd95a', '#d6b146') + p('M8 4L13 13H3Z', '#fbe68c') + p('M8 5.500V10M8 11.300V13', '', '#7b5d12', 1.7),
    exclamation: c(8, 8, 7, '#dc5148', '#c04540') + c(8, 8, 5.900, '', '#f0968e', 0.8) + p('M8 3.500V9.500M8 11V13', '', '#fff', 1.9),
    eye: p('M.5 8Q4 3 8 3T15.500 8Q12 12.500 8 12.500T.5 8Z', '#fafafa', '#d3bba6') + c(8, 7.800, 3.500, '#7fa9de', '#5a82b6') + c(8, 7.800, 1.500, '#172c50') + c(6.800, 6.500, 0.800, '#fff') + p('M.5 7.500Q8 0 15.500 7.500', '', '#cbb09a', 1.2),
    feed: p('M.5 .5H15.500V15.500H.5Z', '#f48b32', '#dc6619') + c(4, 12, 1.400, '#fff') + p('M3 7Q9 7 9 13M3 3.500Q12.500 3.500 12.500 13', '', '#fff', 1.8),
    female: c(8, 4.800, 3.600, '#fff5fc', '#dda0d7', 2.200) + p('M8 9V15.500M4.500 12.500H11.500', '', '#d59ad1', 3) + p('M8 9V14.500M5.500 12.500H10.500', '', '#f4c6ef', 1.3)
  };

  function svg(name) {
    return '<svg class="icon" viewBox="0 0 16 16" aria-hidden="true">' + icons[name] + '</svg>';
  }

  document.querySelectorAll('.picker-list').forEach(function (list) {
    var preview = document.getElementById(list.dataset.preview);
    function select(name) {
      list.querySelectorAll('.icon-button').forEach(function (button) {
        button.setAttribute('aria-pressed', String(button.dataset.icon === name));
      });
      preview.innerHTML = svg(name);
    }
    Object.keys(icons).forEach(function (name) {
      var button = document.createElement('button');
      button.type = 'button';
      button.className = 'icon-button';
      button.dataset.icon = name;
      button.setAttribute('aria-label', name.replace('_', ' '));
      button.innerHTML = svg(name);
      button.addEventListener('click', function () { select(name); });
      list.appendChild(button);
    });
    select(list.dataset.selected);
  });
})();
```
